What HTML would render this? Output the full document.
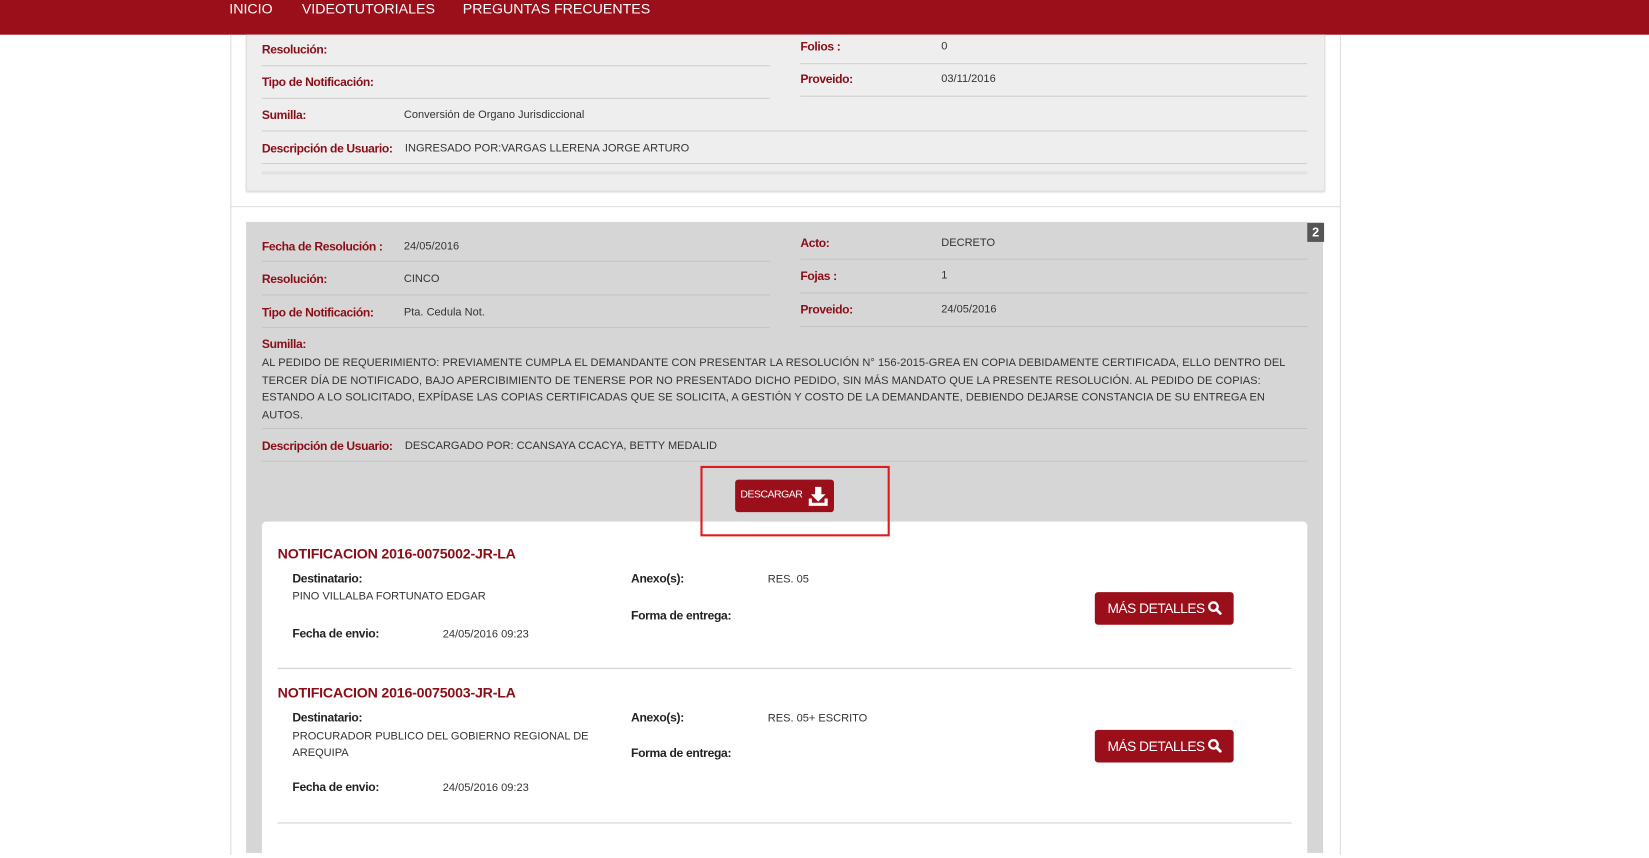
<!DOCTYPE html>
<html><head><meta charset="utf-8"><style>
html,body{margin:0;padding:0;background:#fff;width:1649px;height:845px;overflow:hidden}
#w{position:absolute;left:0;top:0;width:1568px;height:803px;transform:scale(1.0517);transform-origin:0 0;font-family:"Liberation Sans",Arial,sans-serif}
.a{position:absolute;white-space:nowrap}
.l{color:#8b0d16;font-weight:bold;font-size:11.5px;letter-spacing:-0.35px;margin-top:2px}
.t{color:#333;font-size:10.5px;letter-spacing:0}
.k{color:#222;font-weight:bold;font-size:11.5px;letter-spacing:-0.3px;margin-top:1px}
.hr{position:absolute;height:1px;background:#cfcfcf}
.hr2{position:absolute;height:1px;background:#c4c4c4}
.btn{position:absolute;background:#9a0f19;border-radius:3px;color:#fff;font-size:12px;letter-spacing:-0.4px}
</style></head><body><div id="w">
<div class="a" style="left:0;top:0;width:1568px;height:33px;background:#9a0f19"></div>
<div class="a" style="left:218px;top:1px;color:#fff;font-size:13.5px">INICIO</div>
<div class="a" style="left:287px;top:1px;color:#fff;font-size:13.5px">VIDEOTUTORIALES</div>
<div class="a" style="left:440px;top:1px;color:#fff;font-size:13.5px">PREGUNTAS FRECUENTES</div>
<div class="a" style="left:219px;top:33px;width:1054px;height:780px;border-left:1px solid #ddd;border-right:1px solid #ddd"></div>
<!-- panel 1 -->
<div class="a" style="left:234px;top:33px;width:1024px;height:148px;background:#eeeeee;border:1px solid #e0e0e0;border-top:none;box-shadow:0 1px 2px #ccc"></div>
<div class="a l" style="left:249px;top:40px">Resolución:</div>
<div class="hr" style="left:249px;top:62px;width:483px"></div>
<div class="a l" style="left:249px;top:71px">Tipo de Notificación:</div>
<div class="hr" style="left:249px;top:93px;width:483px"></div>
<div class="a l" style="left:761px;top:37px">Folios :</div><div class="a t" style="left:895px;top:38px">0</div>
<div class="hr" style="left:761px;top:60px;width:482px"></div>
<div class="a l" style="left:761px;top:68px">Proveido:</div><div class="a t" style="left:895px;top:69px">03/11/2016</div>
<div class="hr" style="left:761px;top:91px;width:482px"></div>
<div class="a l" style="left:249px;top:102px">Sumilla:</div><div class="a t" style="left:384px;top:103px">Conversión de Organo Jurisdiccional</div>
<div class="hr" style="left:249px;top:124px;width:994px"></div>
<div class="a l" style="left:249px;top:134px">Descripción de Usuario:</div><div class="a t" style="left:385px;top:135px">INGRESADO POR:VARGAS LLERENA JORGE ARTURO</div>
<div class="hr" style="left:249px;top:155px;width:994px"></div>
<div class="a" style="left:249px;top:163px;width:994px;height:3px;background:#e2e2e2"></div>
<div class="hr" style="left:219px;top:196px;width:1055px;background:#ddd"></div>
<!-- panel 2 -->
<div class="a" style="left:234px;top:211px;width:1024px;height:600px;background:#d7d6d7"></div>
<div class="a" style="left:1243px;top:212px;width:16px;height:18px;background:#555;color:#fff;font-size:12px;font-weight:bold;text-align:center;line-height:18px">2</div>
<div class="a l" style="left:249px;top:227px">Fecha de Resolución :</div><div class="a t" style="left:384px;top:228px">24/05/2016</div>
<div class="hr2" style="left:249px;top:248px;width:483px"></div>
<div class="a l" style="left:249px;top:258px">Resolución:</div><div class="a t" style="left:384px;top:259px">CINCO</div>
<div class="hr2" style="left:249px;top:280px;width:483px"></div>
<div class="a l" style="left:249px;top:290px">Tipo de Notificación:</div><div class="a t" style="left:384px;top:291px">Pta. Cedula Not.</div>
<div class="hr2" style="left:249px;top:311px;width:483px"></div>
<div class="a l" style="left:761px;top:224px">Acto:</div><div class="a t" style="left:895px;top:225px">DECRETO</div>
<div class="hr2" style="left:761px;top:246px;width:482px"></div>
<div class="a l" style="left:761px;top:255px">Fojas :</div><div class="a t" style="left:895px;top:256px">1</div>
<div class="hr2" style="left:761px;top:278px;width:482px"></div>
<div class="a l" style="left:761px;top:287px">Proveido:</div><div class="a t" style="left:895px;top:288px">24/05/2016</div>
<div class="hr2" style="left:761px;top:310px;width:482px"></div>
<div class="a l" style="left:249px;top:320px">Sumilla:</div>
<div class="a t" style="left:249px;top:337px;line-height:16.7px;letter-spacing:0.05px">AL PEDIDO DE REQUERIMIENTO: PREVIAMENTE CUMPLA EL DEMANDANTE CON PRESENTAR LA RESOLUCIÓN N° 156-2015-GREA EN COPIA DEBIDAMENTE CERTIFICADA, ELLO DENTRO DEL<br>TERCER DÍA DE NOTIFICADO, BAJO APERCIBIMIENTO DE TENERSE POR NO PRESENTADO DICHO PEDIDO, SIN MÁS MANDATO QUE LA PRESENTE RESOLUCIÓN. AL PEDIDO DE COPIAS:<br>ESTANDO A LO SOLICITADO, EXPÍDASE LAS COPIAS CERTIFICADAS QUE SE SOLICITA, A GESTIÓN Y COSTO DE LA DEMANDANTE, DEBIENDO DEJARSE CONSTANCIA DE SU ENTREGA EN<br>AUTOS.</div>
<div class="hr2" style="left:249px;top:407px;width:994px"></div>
<div class="a l" style="left:249px;top:417px">Descripción de Usuario:</div><div class="a t" style="left:385px;top:418px">DESCARGADO POR: CCANSAYA CCACYA, BETTY MEDALID</div>
<div class="hr2" style="left:249px;top:438px;width:994px"></div>
<!-- card -->
<div class="a" style="left:249px;top:496px;width:994px;height:320px;background:#fff;border-radius:4px"></div>
<div class="btn" style="left:699px;top:456px;width:94px;height:31px">
<span class="a" style="left:5px;top:9px;font-size:10px;letter-spacing:-0.5px">DESCARGAR</span>
<svg class="a" style="left:69px;top:6px" width="20" height="20" viewBox="0 0 20 20"><path d="M7 1h6v7h4l-7 7-7-7h4z" fill="#fff"/><path d="M1 12v7h18v-7h-3v4H4v-4z" fill="#fff"/></svg></div>
<div class="a" style="left:666px;top:443px;width:176px;height:63px;border:2px solid #e01b1b"></div>

<div class="a" style="left:264px;top:519px;color:#8b0d16;font-weight:bold;font-size:13.5px;letter-spacing:-0.2px">NOTIFICACION 2016-0075002-JR-LA</div>
<div class="a k" style="left:278px;top:544px">Destinatario:</div>
<div class="a t" style="left:278px;top:561px">PINO VILLALBA FORTUNATO EDGAR</div>
<div class="a k" style="left:278px;top:596px">Fecha de envio:</div><div class="a t" style="left:421px;top:597px">24/05/2016 09:23</div>
<div class="a k" style="left:600px;top:544px">Anexo(s):</div><div class="a t" style="left:730px;top:545px">RES. 05</div>
<div class="a k" style="left:600px;top:579px">Forma de entrega:</div>
<div class="btn" style="left:1041px;top:563px;width:132px;height:31px"><span class="a" style="left:12px;top:8px;font-size:13px">MÁS DETALLES</span><svg class="a" style="left:107px;top:8px" width="14" height="14" viewBox="0 0 14 14"><circle cx="5.8" cy="5.8" r="4" fill="none" stroke="#fff" stroke-width="2.2"/><path d="M8.5 8.5l3.8 3.8" stroke="#fff" stroke-width="2.6" stroke-linecap="round"/></svg></div>
<div class="hr" style="left:264px;top:635px;width:964px"></div>

<div class="a" style="left:264px;top:651px;color:#8b0d16;font-weight:bold;font-size:13.5px;letter-spacing:-0.2px">NOTIFICACION 2016-0075003-JR-LA</div>
<div class="a k" style="left:278px;top:676px">Destinatario:</div>
<div class="a t" style="left:278px;top:692px;line-height:16px">PROCURADOR PUBLICO DEL GOBIERNO REGIONAL DE<br>AREQUIPA</div>
<div class="a k" style="left:278px;top:742px">Fecha de envio:</div><div class="a t" style="left:421px;top:743px">24/05/2016 09:23</div>
<div class="a k" style="left:600px;top:676px">Anexo(s):</div><div class="a t" style="left:730px;top:677px">RES. 05+ ESCRITO</div>
<div class="a k" style="left:600px;top:710px">Forma de entrega:</div>
<div class="btn" style="left:1041px;top:694px;width:132px;height:31px"><span class="a" style="left:12px;top:8px;font-size:13px">MÁS DETALLES</span><svg class="a" style="left:107px;top:8px" width="14" height="14" viewBox="0 0 14 14"><circle cx="5.8" cy="5.8" r="4" fill="none" stroke="#fff" stroke-width="2.2"/><path d="M8.5 8.5l3.8 3.8" stroke="#fff" stroke-width="2.6" stroke-linecap="round"/></svg></div>
<div class="hr" style="left:264px;top:782px;width:964px"></div>
</div></body></html>
